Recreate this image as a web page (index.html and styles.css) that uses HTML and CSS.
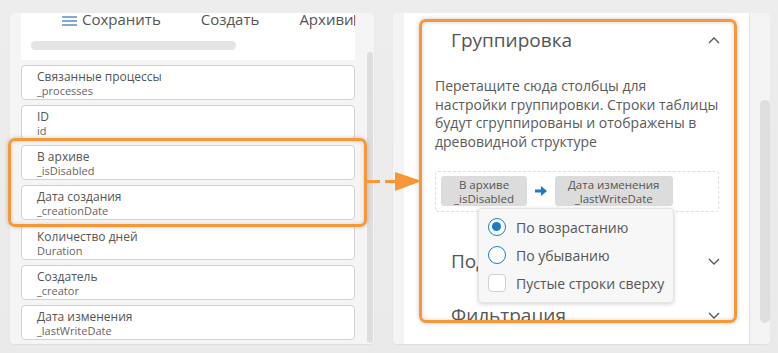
FILE: index.html
```html
<!DOCTYPE html>
<html lang="ru">
<head>
<meta charset="utf-8">
<title>Группировка</title>
<link rel="stylesheet" href="styles.css">
</head>
<body>
<div class="stage">
  <section class="left">
    <div class="left-main">
      <div class="toolbar">
        <div class="tb-row">
          <svg class="burger" width="15" height="10" viewBox="0 0 15 10"><path d="M0 1h15M0 5h15M0 9h15" stroke="#5b8ccc" stroke-width="1.4" fill="none"/></svg>
          <span class="tb-item first">Сохранить</span>
          <span class="tb-item">Создать</span>
          <span class="tb-item">Архиви</span><span class="caret"></span>
        </div>
        <div class="hscroll"></div>
      </div>
      <div class="field"><div class="f-title">Связанные процессы</div><div class="f-sub">_processes</div></div>
      <div class="field"><div class="f-title">ID</div><div class="f-sub">id</div></div>
      <div class="field"><div class="f-title">В архиве</div><div class="f-sub">_isDisabled</div></div>
      <div class="field"><div class="f-title">Дата создания</div><div class="f-sub">_creationDate</div></div>
      <div class="field"><div class="f-title">Количество дней</div><div class="f-sub">Duration</div></div>
      <div class="field"><div class="f-title">Создатель</div><div class="f-sub">_creator</div></div>
      <div class="field"><div class="f-title">Дата изменения</div><div class="f-sub">_lastWriteDate</div></div>
    </div>
    <div class="vscroll"><div class="thumb"></div></div>
  </section>

  <section class="right">
    <div class="rp-body">
      <div class="focus">
        <div class="sec-head first">
          <span>Группировка</span>
          <svg width="12" height="7" viewBox="0 0 12 7"><path d="M1 6l5-5 5 5" stroke="#555" stroke-width="1.3" fill="none"/></svg>
        </div>
        <div class="sec-body">
          <p class="hint">Перетащите сюда столбцы для настройки группировки. Строки таблицы будут сгруппированы и отображены в древовидной структуре</p>
          <div class="dropzone">
            <div class="chip"><div>В архиве</div><div>_isDisabled</div></div>
            <div class="chip-arrow">
              <svg width="12" height="10" viewBox="0 0 12 10"><path d="M0 3.5h6V0l6 5-6 5V6.5H0z" fill="#1b7cc5"/></svg>
            </div>
            <div class="chip"><div>Дата изменения</div><div>_lastWriteDate</div></div>
          </div>
        </div>
        <div class="sec-head">
          <span>Подсветка строк</span>
          <svg width="12" height="7" viewBox="0 0 12 7"><path d="M1 1l5 5 5-5" stroke="#555" stroke-width="1.3" fill="none"/></svg>
        </div>
        <div class="sec-head">
          <span>Фильтрация</span>
          <svg width="12" height="7" viewBox="0 0 12 7"><path d="M1 1l5 5 5-5" stroke="#555" stroke-width="1.3" fill="none"/></svg>
        </div>

        <div class="menu">
          <div class="opt"><span class="radio on"></span><span>По возрастанию</span></div>
          <div class="opt"><span class="radio"></span><span>По убыванию</span></div>
          <div class="opt"><span class="check"></span><span>Пустые строки сверху</span></div>
        </div>
      </div>
    </div>
    <div class="rscroll"><div class="thumb"></div></div>
  </section>

  <div class="highlight"></div>
  <svg class="connector" width="60" height="24" viewBox="0 0 60 24">
    <line x1="0" y1="11.5" x2="32" y2="11.5" stroke="#f79738" stroke-width="3" stroke-dasharray="15 5"/>
    <polygon points="30,2 57,11 30,21" fill="#f79738"/>
  </svg>
</div>
</body>
</html>
```

FILE: styles.css
```css
* { box-sizing: border-box; }

html, body {
  margin: 0;
  width: 778px;
  height: 353px;
  overflow: hidden;
  background: linear-gradient(180deg, #ededed 0%, #eaeaea 100%);
  font-family: "Open Sans", "Liberation Sans", sans-serif;
  color: #555;
}

.stage {
  position: relative;
  display: flex;
  gap: 19px;
  padding: 13px 8px 9px 10px;
  height: 353px;
}

/* ---------- left panel ---------- */
.left {
  width: 364px;
  height: 331px;
  background: #f5f5f5;
  border-radius: 4px;
  overflow: hidden;
  display: flex;
  box-shadow: 0 1px 2px rgba(0, 0, 0, 0.06);
}

.left-main {
  flex: 1;
  padding: 0 12px 0 11px;
  display: flex;
  flex-direction: column;
  gap: 5px;
}

.toolbar {
  background: #fff;
  height: 47px;
  display: flex;
  flex-direction: column;
  overflow: hidden;
}

.tb-row {
  display: flex;
  align-items: center;
  height: 17px;
  margin-top: -2px;
  padding-left: 41px;
  white-space: nowrap;
  font-size: 15px;
  line-height: 17px;
  color: #555;
}

.burger { margin-top: 3px; flex: none; }

.tb-item { margin-left: 40px; }
.tb-item.first { margin-left: 5px; }

.caret {
  width: 1px;
  height: 11px;
  margin-top: 2px;
  background: #d0506a;
}

.hscroll {
  margin: 13px 0 0 10px;
  width: 205px;
  height: 9px;
  border-radius: 5px;
  background: #e4e4e4;
}

.field {
  height: 35px;
  background: #fff;
  border: 1px solid #d2d2d2;
  border-radius: 4px;
  padding: 4px 15px 0;
  flex: none;
}

.f-title {
  font-size: 12px;
  line-height: 14px;
  color: #555;
}

.f-sub {
  font-size: 11px;
  line-height: 14px;
  color: #666;
}

.vscroll {
  width: 9px;
  padding: 39px 1px 1px 0;
  display: flex;
}

.vscroll .thumb {
  flex: 1;
  background: #dedede;
  border-radius: 4px;
}

/* ---------- right panel ---------- */
.right {
  width: 377px;
  height: 331px;
  background: #f4f4f4;
  border-radius: 4px;
  display: flex;
  padding-left: 11px;
  box-shadow: 0 1px 2px rgba(0, 0, 0, 0.06);
}

.rp-body {
  width: 346px;
  background: #fff;
  border-right: 1px solid #e2e2e2;
  padding: 6px 12px 21px 15px;
}

.focus {
  position: relative;
  height: 304px;
  border: 3px solid #f79738;
  border-radius: 7px;
  overflow: hidden;
  box-shadow: 0 0 4px rgba(0, 0, 0, 0.22), inset 0 0 4px rgba(0, 0, 0, 0.18);
}

.sec-head {
  height: 54px;
  display: flex;
  align-items: center;
  justify-content: space-between;
  padding: 0 14px 0 29px;
  font-size: 19px;
  color: #555;
  white-space: nowrap;
}

.sec-head.first { height: 36px; }

.sec-body {
  padding: 19px 15px 22px 13px;
}

.hint {
  margin: 0;
  width: 285px;
  font-size: 14px;
  line-height: 18.5px;
  color: #5a5a5a;
}

.dropzone {
  margin-top: 20px;
  height: 41px;
  border: 1px dashed #dedede;
  border-radius: 3px;
  padding: 4px 5px;
  display: flex;
  align-items: flex-start;
}

.chip {
  height: 30px;
  padding: 2px 13px 0;
  background: #dcdcdc;
  border-radius: 3px;
  font-size: 11.5px;
  line-height: 14px;
  text-align: center;
  color: #555;
  white-space: nowrap;
}

.chip-arrow {
  width: 28px;
  height: 30px;
  display: flex;
  align-items: center;
  justify-content: center;
  padding-left: 1px;
}

.menu {
  position: absolute;
  left: 56px;
  top: 186px;
  width: 196px;
  height: 95px;
  background: #f7f7f7;
  border: 1px solid #e4e4e4;
  border-radius: 4px;
  box-shadow: 0 1px 4px rgba(0, 0, 0, 0.18);
  padding: 4px 0 0 9px;
}

.opt {
  height: 28px;
  display: flex;
  align-items: center;
  gap: 10px;
  font-size: 14px;
  color: #555;
  white-space: nowrap;
}

.radio {
  width: 18px;
  height: 18px;
  border: 1.5px solid #1b7cc5;
  border-radius: 50%;
  background: #fff;
  position: relative;
  flex: none;
}

.radio.on::after {
  content: "";
  position: absolute;
  left: 3px;
  top: 3px;
  width: 9px;
  height: 9px;
  border-radius: 50%;
  background: #1b7cc5;
}

.check {
  width: 18px;
  height: 18px;
  border: 1px solid #cfcfcf;
  border-radius: 4px;
  background: #fff;
  flex: none;
}

.rscroll {
  flex: 1;
  display: flex;
  justify-content: flex-end;
  padding: 87px 0 21px;
}

.rscroll .thumb {
  width: 10px;
  background: #dedede;
  border-radius: 5px;
}

/* ---------- overlays ---------- */
.highlight {
  position: absolute;
  left: 8px;
  top: 138px;
  width: 359px;
  height: 89px;
  border: 3px solid #f79738;
  border-radius: 7px;
  box-shadow: 0 0 4px rgba(0, 0, 0, 0.22), inset 0 0 4px rgba(0, 0, 0, 0.15);
  pointer-events: none;
}

.connector {
  position: absolute;
  left: 365px;
  top: 170px;
}
```
